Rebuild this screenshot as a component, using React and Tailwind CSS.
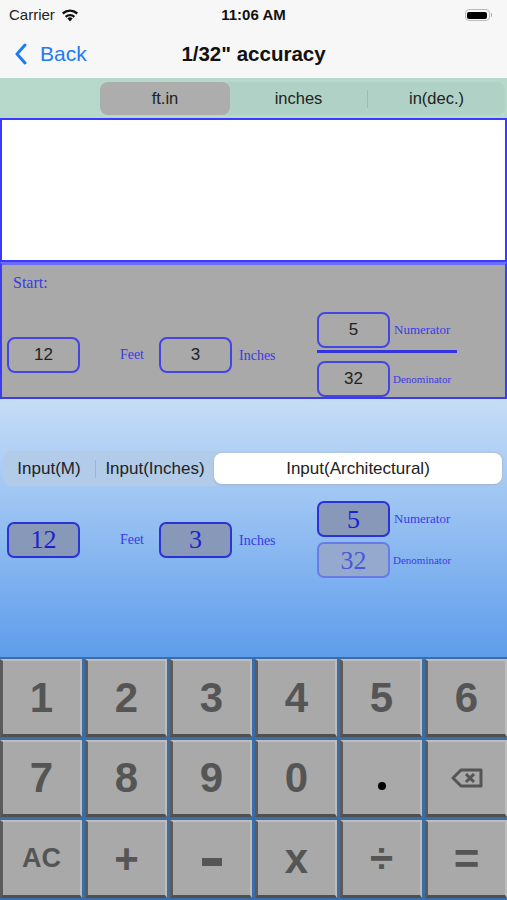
import React from "react";

const sans = { fontFamily: '"Liberation Sans", Arial, sans-serif' };
const serif = { fontFamily: '"Liberation Serif", "Times New Roman", serif' };

const StartBox = ({ value }) => (
  <div
    className="w-[73px] h-[36px] border-2 border-[#4545e6] rounded-[8px] flex items-center justify-center text-[17px] text-[#222]"
    style={sans}
  >
    {value}
  </div>
);

const InputBox = ({ value, faded }) => (
  <div
    className={
      "w-[73px] h-[36px] border-2 rounded-[7px] flex items-center justify-center text-[26px] " +
      (faded
        ? "bg-[#94a9cd] border-[#6a7be6] text-[#4a57d8]"
        : "bg-[#8798b9] border-[#2a32d8] text-[#1c22d0]")
    }
    style={serif}
  >
    {value}
  </div>
);

const Label = ({ children, className = "" }) => (
  <span className={"text-[#3a3ae6] " + className} style={serif}>
    {children}
  </span>
);

const Row = ({ Box, line }) => (
  <div className="flex items-center pl-[7px]">
    <Box value="12" />
    <div className="w-[79px] flex justify-end pr-[15px]">
      <Label className="text-[14px]">Feet</Label>
    </div>
    <Box value="3" />
    <div className="w-[85px] pl-[7px]">
      <Label className="text-[14px]">Inches</Label>
    </div>
    <div className="flex flex-col">
      <div className="flex items-center">
        <Box value="5" />
        <Label className="text-[13px] ml-[4px]">Numerator</Label>
      </div>
      {line ? (
        <div className="w-[140px] h-[3px] bg-[#3333e0] mt-[2px] mb-[8px]" />
      ) : (
        <div className="h-[5px]" />
      )}
      <div className="flex items-center">
        <Box value="32" faded={!line} />
        <Label className="text-[11px] ml-[3px]">Denominator</Label>
      </div>
    </div>
  </div>
);

const Wifi = () => (
  <svg width="18" height="13" viewBox="0 0 18 13">
    <path d="M9 12.5l2.6-3.1a4 4 0 0 0-5.2 0z" fill="#111" />
    <path d="M3.9 6.9a7.6 7.6 0 0 1 10.2 0l-1.5 1.8a5.3 5.3 0 0 0-7.2 0z" fill="#111" />
    <path d="M1 3.6a12 12 0 0 1 16 0l-1.5 1.8a9.6 9.6 0 0 0-13 0z" fill="#111" />
  </svg>
);

const Backspace = () => (
  <svg width="32" height="20" viewBox="0 0 32 20">
    <path d="M10 2h20v16H10L2 10z" fill="none" stroke="#555" strokeWidth="3" strokeLinejoin="round" />
    <path d="M15 6l8 8M23 6l-8 8" stroke="#555" strokeWidth="3" />
  </svg>
);

const keys = ["1", "2", "3", "4", "5", "6", "7", "8", "9", "0", ".", "del", "AC", "+", "-", "x", "÷", "="];

const Key = ({ k }) => {
  let content = k;
  let size = "text-[42px]";
  if (k === "del") content = <Backspace />;
  if (k === "AC") size = "text-[27px]";
  if (k === ".") content = <span className="w-[8px] h-[8px] rounded-full bg-black mt-[16px]" />;
  if (k === "-") content = <span className="w-[20px] h-[8px] bg-[#555] mt-[6px]" />;
  if (k === "=") size = "text-[44px]";
  return (
    <div
      className={
        "flex items-center justify-center bg-[#a9a9a9] border-t-2 border-r-2 border-t-[#bdbdbd] border-r-[#bdbdbd] border-l-[3px] border-b-[3px] border-l-[#5b5b5b] border-b-[#505050] font-bold text-[#555] " +
        size
      }
      style={sans}
    >
      {content}
    </div>
  );
};

export default function App() {
  return (
    <div className="w-[507px] h-[900px] flex flex-col overflow-hidden bg-white" style={sans}>
      {/* status bar */}
      <div className="h-[30px] bg-[#f7f7f7] flex items-center px-[9px] relative">
        <span className="text-[15px] text-[#222]">Carrier</span>
        <span className="ml-[6px]"><Wifi /></span>
        <span className="absolute left-0 right-0 text-center text-[15px] font-bold text-[#111]">11:06 AM</span>
        <div className="ml-auto mr-[6px] flex items-center">
          <div className="w-[25px] h-[12px] rounded-[4px] border border-[#bbb] p-[1.5px]">
            <div className="w-full h-full rounded-[2px] bg-black" />
          </div>
          <div className="w-[1.5px] h-[4px] bg-[#aaa] ml-[1px] rounded-r" />
        </div>
      </div>

      {/* nav bar */}
      <div className="h-[48px] bg-[#f7f7f7] flex items-center relative px-[14px]">
        <svg width="14" height="22" viewBox="0 0 14 22">
          <path d="M11 2L3 11l8 9" fill="none" stroke="#1c7cf4" strokeWidth="3" strokeLinecap="round" strokeLinejoin="round" />
        </svg>
        <span className="ml-[12px] text-[21px] text-[#1c7cf4]">Back</span>
        <span className="absolute left-0 right-0 text-center text-[20.5px] font-bold text-[#111]">1/32" accuracy</span>
      </div>

      {/* units tabs */}
      <div className="h-[40px] bg-[#b6d9cb] pl-[100px] pr-[2px] pt-[4px] pb-[3px]">
        <div className="h-full flex items-center rounded-[8px] bg-[#b0d2c6] text-[16.5px] text-[#222]">
          <div className="w-[130px] h-full rounded-[8px] bg-[#adadad] flex items-center justify-center">ft.in</div>
          <div className="flex-1 text-center">inches</div>
          <div className="w-px h-[18px] bg-[#9fbcb2]" />
          <div className="flex-1 text-center">in(dec.)</div>
        </div>
      </div>

      {/* result display */}
      <div className="h-[144px] bg-white border-2 border-[#3a3aff]" />

      {/* start panel */}
      <div className="h-[137px] bg-[#a9a9a9] border-2 border-t-[3px] border-t-[#6b6bff] border-[#3b3bf0] flex flex-col">
        <div className="pl-[11px] pt-[9px] text-[16px] leading-[18px]">
          <Label className="text-[16px]">Start:</Label>
        </div>
        <div className="mt-[20px] -ml-[2px]">
          <Row Box={StartBox} line />
        </div>
      </div>

      {/* input area */}
      <div className="flex-1 bg-gradient-to-b from-[#c6ddf6] to-[#5e9deb] flex flex-col">
        <div className="mt-[52px] mx-[3px] h-[35px] rounded-[9px] bg-[#b1cbe9] flex items-center text-[17px] text-[#222]">
          <div className="w-[92px] text-center">Input(M)</div>
          <div className="w-px h-[18px] bg-[#9fb6d2]" />
          <div className="w-[118px] text-center">Input(Inches)</div>
          <div className="flex-1 h-[31px] mr-[2px] rounded-[8px] bg-white flex items-center justify-center shadow-sm">
            Input(Architectural)
          </div>
        </div>
        <div className="mt-[15px]">
          <Row Box={InputBox} />
        </div>
      </div>

      {/* keypad */}
      <div className="h-[243px] bg-[#3b6ea6] pt-[2px] pb-[2px] grid grid-cols-6 grid-rows-3 gap-[3px]">
        {keys.map((k) => (
          <Key key={k} k={k} />
        ))}
      </div>
    </div>
  );
}
